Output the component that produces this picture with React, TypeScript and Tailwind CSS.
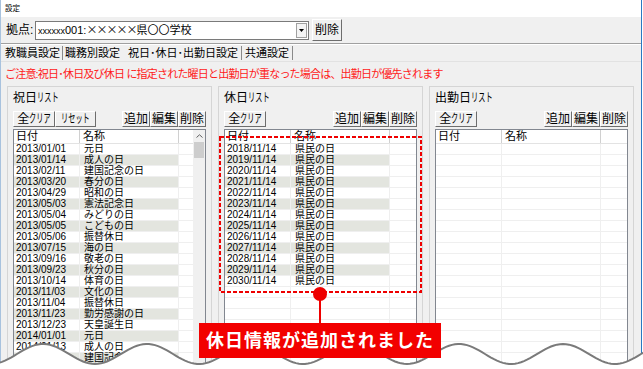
import React from 'react';

// 祝日リストのデータ
const holidays: [string, string][] = [
  ['2013/01/01', '元日'],
  ['2013/01/14', '成人の日'],
  ['2013/02/11', '建国記念の日'],
  ['2013/03/20', '春分の日'],
  ['2013/04/29', '昭和の日'],
  ['2013/05/03', '憲法記念日'],
  ['2013/05/04', 'みどりの日'],
  ['2013/05/05', 'こどもの日'],
  ['2013/05/06', '振替休日'],
  ['2013/07/15', '海の日'],
  ['2013/09/16', '敬老の日'],
  ['2013/09/23', '秋分の日'],
  ['2013/10/14', '体育の日'],
  ['2013/11/03', '文化の日'],
  ['2013/11/04', '振替休日'],
  ['2013/11/23', '勤労感謝の日'],
  ['2013/12/23', '天皇誕生日'],
  ['2014/01/01', '元日'],
  ['2014/01/13', '成人の日'],
  ['2014/02/11', '建国記念の日'],
];

const kyujitsu: [string, string][] = Array.from({ length: 13 }, (_, i) => [
  `${2018 + i}/11/14`,
  '県民の日',
]);

const TOTAL_ROWS = 20;

// wave at the bottom (torn paper edge)
const wavePoints: string[] = [];
for (let x = -10; x <= 654; x += 3) {
  const y = 354 - 10 * Math.cos((2 * Math.PI * (x - 43)) / 104);
  wavePoints.push(`${x},${y.toFixed(2)}`);
}
const waveLine = `M${wavePoints.join(' L')}`;
const waveFill = `${waveLine} L654,380 L-10,380 Z`;

// narrow (hankaku style) katakana
function Kana({ text }: { text: string }) {
  return (
    <span
      className="inline-block whitespace-nowrap"
      style={{ width: `${text.length * 0.6}em` }}
    >
      <span className="inline-block origin-left scale-x-[0.6]">{text}</span>
    </span>
  );
}

function WinButton({
  children,
  w,
}: {
  children: React.ReactNode;
  w: string;
}) {
  return (
    <button
      className={`${w} h-[16px] flex items-center justify-center text-[12px] leading-none bg-[#f0f0f0] border border-t-white border-l-white border-b-[#6d6d6d] border-r-[#6d6d6d]`}
    >
      {children}
    </button>
  );
}

function ListView({
  rows,
  lastCol,
  scroll,
}: {
  rows: [string, string][];
  lastCol: string;
  scroll?: boolean;
}) {
  const filled = Array.from({ length: TOTAL_ROWS }, (_, i) => rows[i]);
  return (
    <div className="flex flex-1 min-h-0 bg-white border border-[#828790] overflow-hidden">
      <div className="flex flex-col flex-1">
        <div className="flex h-[14px] border-b border-[#e3e3e3] text-[11px] leading-none">
          <div className="w-[66px] pl-[2px] flex items-center border-r border-[#d0d0d0]">
            日付
          </div>
          <div className="w-[99px] pl-[3px] flex items-center border-r border-[#d0d0d0]">
            名称
          </div>
          <div className={lastCol} />
        </div>
        {filled.map((row, i) => {
          const gray = row && i % 2 === 1 ? 'bg-[#e3e5df]' : '';
          return (
            <div key={i} className="flex h-[11px] text-[10px] leading-[10px]">
              <div
                className={`w-[66px] pl-[2px] border-b border-r border-[#efefef] ${gray}`}
              >
                {row ? row[0] : ''}
              </div>
              <div
                className={`w-[99px] pl-[4px] border-b border-r border-[#efefef] ${gray}`}
              >
                {row ? row[1] : ''}
              </div>
              <div className={`${lastCol} border-b border-[#efefef]`} />
            </div>
          );
        })}
      </div>
      {scroll && (
        <div className="w-[12px] flex flex-col bg-[#f0f0f0]">
          <div className="h-[12px] flex items-center justify-center">
            <svg width="7" height="4" viewBox="0 0 7 4">
              <path d="M0.5 3.5 L3.5 0.8 L6.5 3.5" fill="none" stroke="#606060" strokeWidth="1" />
            </svg>
          </div>
          <div className="mx-[1px] h-[16px] bg-[#cdcdcd]" />
        </div>
      )}
    </div>
  );
}

function Panel({
  title,
  withReset,
  rows,
  lastCol,
  scroll,
}: {
  title: string;
  withReset?: boolean;
  rows: [string, string][];
  lastCol: string;
  scroll?: boolean;
}) {
  return (
    <div className="flex flex-col flex-1 h-full border border-[#d5d5d5] px-[5px]">
      <div className="h-[20px] mt-[1px] flex items-center text-[12px] leading-none">
        {title}
        <Kana text="リスト" />
      </div>
      <div className="flex justify-between mt-[3px]">
        <div className="flex">
          <WinButton w="w-[42px]">
            全<Kana text="クリア" />
          </WinButton>
          {withReset && (
            <WinButton w="w-[41px]">
              <Kana text="リセット" />
            </WinButton>
          )}
        </div>
        <div className="flex">
          <WinButton w="w-[28px]">追加</WinButton>
          <WinButton w="w-[28px]">編集</WinButton>
          <WinButton w="w-[28px]">削除</WinButton>
        </div>
      </div>
      <div className="flex flex-col flex-1 min-h-0 mt-[2px]">
        <ListView rows={rows} lastCol={lastCol} scroll={scroll} />
      </div>
    </div>
  );
}

export default function App() {
  return (
    <div className="relative w-[643px] h-[369px] overflow-hidden bg-white font-['Liberation_Sans','Noto_Sans_CJK_JP',sans-serif] text-black">
      <div className="flex flex-col w-[642px] h-full bg-[#f0f0f0] border-l border-l-[#a8c2de] border-r border-r-[#2b79c2]">
        {/* title bar */}
        <div className="h-[17px] bg-white flex items-center pl-[4px] text-[7.5px] leading-none">
          設定
        </div>

        {/* 拠点 */}
        <div className="h-[26px] flex items-center pl-[5px] text-[12px] leading-none">
          <span className="w-[29px]">拠点:</span>
          <div className="w-[274px] h-[19px] flex items-center justify-between bg-white border border-[#7a7a7a] pl-[2px] text-[11px]">
            <span>
              <span className="text-[9px]">xxxxxx</span>001:
              <span className="font-['Noto_Sans_CJK_JP',sans-serif] tracking-[-1px]">×××××</span>
              <span className="font-['Noto_Sans_CJK_JP',sans-serif]">県〇〇学校</span>
            </span>
            <div className="w-[11px] h-[15px] mr-[1px] flex items-center justify-center border border-[#a0a0a0] bg-[#f4f4f4]">
              <svg width="5" height="3" viewBox="0 0 5 3">
                <path d="M0 0 L5 0 L2.5 3 Z" fill="#000" />
              </svg>
            </div>
          </div>
          <button className="ml-[3px] w-[30px] h-[22px] flex items-center justify-center bg-[#f0f0f0] border border-t-white border-l-white border-b-[#6d6d6d] border-r-[#6d6d6d] text-[12px] leading-none">
            削除
          </button>
        </div>
        <div className="h-[2px] border-t border-[#a0a0a0] border-b border-b-white" />

        {/* tabs */}
        <div className="h-[16px] flex items-center pl-[4px] text-[11px] leading-none">
          <span>教職員設定</span>
          <span className="mx-[2px] w-[1px] h-[14px] bg-[#8a8a8a]" />
          <span>職務別設定</span>
          <span className="ml-[8px]">祝日･休日･出勤日設定</span>
          <span className="mx-[3px] w-[1px] h-[14px] bg-[#8a8a8a]" />
          <span>共通設定</span>
          <span className="ml-[3px] w-[1px] h-[14px] bg-[#8a8a8a]" />
        </div>
        <div className="h-[1px] bg-[#e2e2e2]" />

        {/* notice */}
        <div className="h-[24px] flex items-center pl-[4px] text-[11px] tracking-[-0.8px] leading-none text-[#ff1a1a]">
          ご注意:祝日･休日及び休日 に指定された曜日と出勤日が重なった場合は、出勤日が優先されます
        </div>

        {/* three lists */}
        <div className="flex flex-1 min-h-0 gap-[6px] pl-[6px] pr-[7px]">
          <Panel title="祝日" withReset rows={holidays} lastCol="w-[14px]" scroll />
          <Panel title="休日" rows={kyujitsu} lastCol="flex-1" />
          <Panel title="出勤日" rows={[]} lastCol="flex-1" />
        </div>
      </div>

      {/* annotation overlay */}
      <svg
        className="absolute left-0 top-0 pointer-events-none"
        width="643"
        height="369"
        viewBox="0 0 643 369"
      >
        <rect
          x="220"
          y="137"
          width="201"
          height="155"
          fill="none"
          stroke="#ee0000"
          strokeWidth="2"
          strokeDasharray="4 2"
        />
        <line x1="320" y1="294" x2="320" y2="324" stroke="#ee0000" strokeWidth="2" />
        <circle cx="320" cy="294" r="7" fill="#ee0000" />
        <path d={waveFill} fill="#ffffff" />
        <path d={waveLine} fill="none" stroke="#7a7a7a" strokeWidth="2" />
      </svg>

      <div className="absolute left-[199px] top-[323px] w-[242px] h-[35px] bg-[#f20000] flex items-center justify-center text-white text-[18px] font-bold tracking-[1px] leading-none">
        休日情報が追加されました
      </div>
    </div>
  );
}
